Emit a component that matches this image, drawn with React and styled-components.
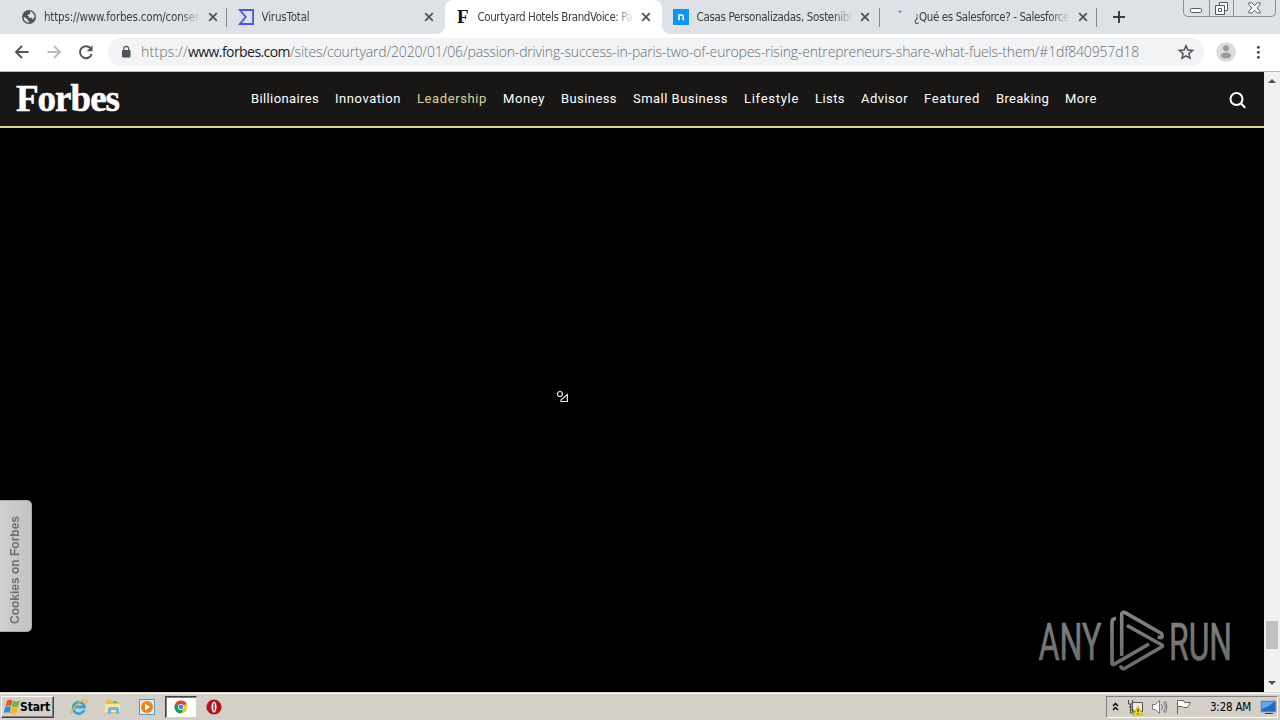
import React, { useLayoutEffect, useRef, useState } from 'react';
import styled, { createGlobalStyle, css } from 'styled-components';

const GlobalStyle = createGlobalStyle`
  * {
    box-sizing: border-box;
  }

  body {
    margin: 0;
    overflow: hidden;
    background: #000;
    font-family: "DejaVu Sans Condensed", "DejaVu Sans", sans-serif;
  }

  svg {
    display: block;
    flex: none;
  }
`;

const Screen = styled.div`
  display: flex;
  flex-direction: column;
  width: 1280px;
  height: 720px;
  overflow: hidden;
`;

const TabStrip = styled.div`
  display: flex;
  flex: none;
  height: 34px;
  padding-left: 9.5px;
  background: #dee1e6;
`;

const Tab = styled.div`
  position: relative;
  display: flex;
  align-items: center;
  width: 217.5px;
  padding: 0 9px 0 11px;
  color: #3c4043;
  ${({ $divider }) => $divider && css`
    &::after {
      content: '';
      position: absolute;
      right: 0;
      top: 8px;
      width: 1px;
      height: 19px;
      background: #85888d;
    }
  `}
  ${({ $active }) => $active && css`
    background: #fff;
    border-radius: 8px 8px 0 0;
    &::before,
    &::after {
      content: '';
      position: absolute;
      bottom: 0;
      width: 8px;
      height: 8px;
    }
    &::before {
      left: -8px;
      background: radial-gradient(circle at 0 0, transparent 7.5px, #fff 8px);
    }
    &::after {
      right: -8px;
      background: radial-gradient(circle at 100% 0, transparent 7.5px, #fff 8px);
    }
  `}
`;

const Favicon = styled.div`
  display: flex;
  align-items: center;
  justify-content: center;
  width: 16px;
  height: 16px;
  margin-right: 7.5px;
`;

const FaviconLetter = styled.span`
  color: #111;
  font: bold 19px/16px "Liberation Serif", serif;
`;

const TabTitle = styled.div`
  width: 156px;
  margin-right: 6.5px;
  font-size: 11.5px;
  line-height: 16px;
  white-space: nowrap;
  mask-image: linear-gradient(to right, #000 136px, transparent 156px);
`;

const NewTab = styled.div`
  display: flex;
  align-items: center;
  padding-left: 15px;
`;

const WindowControls = styled.div`
  display: flex;
  width: 93px;
  height: 17px;
  margin: 0 4px 0 auto;
  border: 1px solid #8c8f98;
  border-top: 0;
  border-radius: 0 0 5px 5px;
`;

const WindowButton = styled.div`
  display: flex;
  align-items: center;
  justify-content: center;
  width: ${({ $wide }) => ($wide ? '42px' : '25px')};
  & + & {
    border-left: 1px solid #8c8f98;
  }
`;

const Toolbar = styled.div`
  display: flex;
  flex: none;
  align-items: center;
  height: 38px;
  padding: 0 14px 1px;
  background: #fff;
  border-bottom: 1px solid #b5bcc0;
`;

const NavButtons = styled.div`
  display: flex;
  gap: 16px;
  width: 94px;
`;

const AddressBar = styled.div`
  display: flex;
  align-items: center;
  width: 1096px;
  height: 28px;
  padding: 0 10px 0 12px;
  border-radius: 14px;
  background: #f1f3f4;
`;

const Url = styled.div`
  display: flex;
  flex: 1;
  margin-left: 9px;
  color: #6b6f74;
  font: 300 14px/20px "Open Sans", sans-serif;
`;

const Host = styled.span`
  color: #202124;
  font-weight: 400;
`;

const ToolbarEnd = styled.div`
  display: flex;
  align-items: center;
  gap: 14px;
  margin-left: 12px;
`;

const Viewport = styled.div`
  display: flex;
  flex: 1;
  min-height: 0;
`;

const Page = styled.main`
  position: relative;
  width: 1264px;
  background: #000;
`;

const SiteHeader = styled.header`
  display: flex;
  align-items: center;
  height: 56px;
  padding: 0 17px 0 16px;
  background: #181716;
  border-bottom: 2px solid #dcd29a;
`;

const Logo = styled.div`
  width: 235px;
  padding-bottom: 1px;
  color: #fff;
  font: bold 37px/40px "Liberation Serif", serif;
  -webkit-text-stroke: 0.5px #fff;
`;

const SiteNav = styled.nav`
  display: flex;
  flex: 1;
  gap: 16px;
`;

const SiteLink = styled.a`
  color: ${({ $current }) => ($current ? '#dcd29a' : '#fff')};
  font: 13px/18px Roboto, "Liberation Sans", sans-serif;
`;

const SearchButton = styled.div`
  padding-top: 2px;
`;

const CookieTab = styled.div`
  position: absolute;
  left: 0;
  top: 428px;
  display: flex;
  align-items: center;
  justify-content: center;
  width: 32px;
  height: 132px;
  padding: 8px 2px 0 0;
  border: 1px solid #aaa;
  border-left: 0;
  border-radius: 0 5px 5px 0;
  background: linear-gradient(to right, #d0d0d0, #c2c2c2);
  color: #707070;
  font: bold 12px/14px "Liberation Sans", sans-serif;
  writing-mode: vertical-rl;
  white-space: nowrap;

  span {
    transform: rotate(180deg);
  }
`;

const Pointer = styled.div`
  position: absolute;
  left: 556px;
  top: 318px;
`;

const Watermark = styled.div`
  position: absolute;
  left: 1036px;
  top: 536px;
`;

const Scrollbar = styled.div`
  display: flex;
  flex-direction: column;
  align-items: center;
  width: 16px;
  padding: 7px 0;
  background: #f1f1f1;
`;

const Thumb = styled.div`
  width: 12px;
  height: 28px;
  margin: auto 0 32px;
  background: #c1c1c1;
`;

const Taskbar = styled.footer`
  display: flex;
  flex: none;
  align-items: center;
  height: 28px;
  padding: 2px 2px 0 1px;
  background: #d4d0c8;
  box-shadow: inset 0 1px #d4d0c8, inset 0 2px #fff;
`;

const StartButton = styled.div`
  display: flex;
  align-items: center;
  width: 53px;
  height: 22px;
  padding-left: 2px;
  border: 1px solid;
  border-color: #fff #404040 #404040 #fff;
  box-shadow: inset -1px -1px #808080;
  color: #000;
  font: bold 12px/18px "DejaVu Sans Condensed", "DejaVu Sans", sans-serif;
`;

const QuickLaunch = styled.div`
  display: flex;
  align-items: center;
  margin-left: 8px;
`;

const TaskButton = styled.div`
  display: flex;
  align-items: center;
  justify-content: center;
  width: 34px;
  height: 22px;
  ${({ $pressed }) => $pressed && css`
    width: 32px;
    margin: 0 0 0 1px;
    background: #fff;
    border: 1px solid;
    border-color: #404040 #d4d0c8 #d4d0c8 #404040;
    box-shadow: inset 1px 1px #808080;
  `}
`;

const Tray = styled.div`
  display: flex;
  align-items: center;
  width: 172px;
  height: 22px;
  margin-left: auto;
  padding-left: 5px;
  border: 1px solid;
  border-color: #808080 #fff #fff #808080;
`;

const TrayIcons = styled.div`
  display: flex;
  align-items: center;
  gap: 7px;
  width: 98px;
`;

const Clock = styled.div`
  width: 50px;
  color: #000;
  font-size: 11.5px;
  line-height: 16px;
`;

const FitSpan = styled.span`
  display: inline-block;
  white-space: pre;
`;

// Spreads the glyphs evenly so the text fills the given width.
function Fit({ width, children }) {
  const ref = useRef(null);
  const [spacing, setSpacing] = useState(0);

  useLayoutEffect(() => {
    const natural = ref.current.getBoundingClientRect().width;
    setSpacing((width - natural) / children.length);
  }, []);

  return <FitSpan ref={ref} style={{ letterSpacing: spacing }}>{children}</FitSpan>;
}

const CloseIcon = () => (
  <svg width="14" height="14" viewBox="0 0 14 14" stroke="#505357" strokeWidth="1.8">
    <path d="M3.2 3.2l7.600 7.600M10.800 3.200l-7.600 7.600" />
  </svg>
);

const GlobeIcon = () => (
  <svg width="16" height="16" viewBox="0 0 16 16">
    <circle cx="8" cy="8" r="7" fill="#505357" />
    <path d="M2.6 7.8l4 2.4v1.5l1.6.8v1.2C4.8 13.7 2.6 11.3 2.6 7.8zM9 2.5c3 .6 4.6 2.9 4.6 5.6l-1.9 2.4-1.2-1.8H7.8V7.2l-1.6-.7 1.3-1.3H9z" fill="#dee1e6" />
  </svg>
);

const VirusTotalIcon = () => (
  <svg width="16" height="16" viewBox="0 0 16 16" fill="none" stroke="#4855f0" strokeWidth="1.8">
    <path d="M1.8 1h13.3v14H1.8l6-7z" />
  </svg>
);

const CasasIcon = () => (
  <svg width="16" height="16" viewBox="0 0 16 16">
    <path fill="#0c97f5" d="M0 0h16v16H0z" />
    <path d="M6 11.2V6h2.5q1.7 0 1.7 1.7v3.5" fill="none" stroke="#fff" strokeWidth="1.700" />
  </svg>
);

const LoadingIcon = () => (
  <svg width="16" height="16" viewBox="0 0 16 16">
    <path d="M7.500 2.600h3" stroke="#5185db" strokeWidth="1.8" />
  </svg>
);

const ArrowIcon = ({ forward }) => (
  <svg width="16" height="16" viewBox="0 0 16 16" fill="none" stroke={forward ? '#b9bbbe' : '#505357'} strokeWidth="1.9">
    <path d={forward ? 'M1.5 8h12M8 2l6 6-6 6' : 'M14.5 8h-12M8 2L2 8l6 6'} />
  </svg>
);

const ReloadIcon = () => (
  <svg width="16" height="16" viewBox="0 0 16 16">
    <path d="M12.5 4.2A6 6 0 1 0 13.7 10" fill="none" stroke="#505357" strokeWidth="2" />
    <path d="M14.5 1.2v6H8.7z" fill="#505357" />
  </svg>
);

const LockIcon = () => (
  <svg width="12" height="14" viewBox="0 0 12 14">
    <rect x="2" y="5" width="8.500" height="7.500" rx="1" fill="#505357" />
    <path d="M3.800 6V3.7a2.400 2.400 0 0 1 4.800 0V6" fill="none" stroke="#505357" strokeWidth="1.2" />
  </svg>
);

const StarIcon = () => (
  <svg width="16" height="16" viewBox="0 0 16 16" fill="none" stroke="#505357" strokeWidth="1.5">
    <path d="M8 1.8l1.8 4.3 4.7.4-3.6 3.1 1.1 4.6L8 11.8l-4 2.4 1.1-4.6-3.6-3.1 4.7-.4z" />
  </svg>
);

const AvatarIcon = () => (
  <svg width="20" height="20" viewBox="0 0 20 20">
    <circle cx="10" cy="10" r="9.8" fill="#dcdcdc" />
    <circle cx="10" cy="6.3" r="3" fill="#9b9b9b" />
    <ellipse cx="10" cy="13.4" rx="5.2" ry="2.9" fill="#9b9b9b" />
  </svg>
);

const MenuIcon = () => (
  <svg width="16" height="16" viewBox="0 0 16 16" fill="#505357">
    <circle cx="8.400" cy="3.2" r="1.5" />
    <circle cx="8.400" cy="8.2" r="1.5" />
    <circle cx="8.400" cy="13.2" r="1.5" />
  </svg>
);

const SearchIcon = () => (
  <svg width="18" height="18" viewBox="0 0 18 18" fill="none" stroke="#fff" strokeWidth="2">
    <circle cx="7.500" cy="8" r="6" />
    <path d="M11.800 12.300l4.4 4.4" />
  </svg>
);

const AnyRunLogo = () => (
  <svg width="200" height="70" viewBox="0 0 200 70">
    <defs>
      <linearGradient id="metal" gradientUnits="userSpaceOnUse" x1="0" y1="3" x2="0" y2="63">
        <stop offset="0" stopColor="#858585" />
        <stop offset="1" stopColor="#686868" />
      </linearGradient>
    </defs>
    <g fill="url(#metal)" stroke="url(#metal)" strokeWidth=".7" fontFamily="Roboto" fontSize="52">
      <text x="2.500" y="51.700" textLength="63" lengthAdjust="spacingAndGlyphs">ANY</text>
      <text x="133" y="51.700" textLength="63" lengthAdjust="spacingAndGlyphs">RUN</text>
    </g>
    <g fill="none" stroke="url(#metal)" strokeWidth="3.600" strokeLinejoin="round">
      <path d="M80 10.500h-1q-3 .5-3 4v41.500l1.500.6L113 36" />
      <path d="M85.700 48V6q.5-2.200 3-1.600L125.500 25.500q1.800 3.500-.8 4.300l-3-.7" />
      <path d="M91 17.500L126 37q1 1 0 1.800L88.500 60.500q-3.500.8-3.700-3.200" />
    </g>
  </svg>
);

const PointerIcon = () => (
  <svg width="14" height="14" viewBox="0 0 14 14" fill="none" stroke="#e8e8e8" strokeWidth="1.2">
    <circle cx="4" cy="4" r="2.5" />
    <path d="M11.400 4.500v7H5v-1.500z" />
  </svg>
);

const ScrollArrow = ({ down }) => (
  <svg width="8" height="4" viewBox="0 0 8 4">
    <path d={down ? 'M0 0h8L4 4z' : 'M0 4h8L4 0z'} fill="#505050" />
  </svg>
);

const WindowsFlag = () => (
  <svg width="16" height="16" viewBox="0 0 16 16">
    <path d="M3 1.500q3-2 5.500-.3L7.200 7.200Q4.700 5.600 1.400 7.400z" fill="#e95b26" />
    <path d="M9.200 1.700q3 1.500 6.500-.2L14.200 7.400q-3 1.500-6.300.2z" fill="#73b43a" />
    <path d="M1.200 8.100q3-1.500 5.700-.2l-1.400 6Q3 12.400-.3 14z" fill="#3488d0" />
    <path d="M7.700 8.300q3 1.500 6.200 0L12.500 14.300q-3 1.500-6.300 0z" fill="#f5b91e" />
  </svg>
);

const ExplorerIcon = () => (
  <svg width="18" height="18" viewBox="0 0 18 18" fill="none">
    <path d="M14.200 12a5.700 5.700 0 1 1 .3-3H5" stroke="#38a2dd" strokeWidth="2.800" />
    <path d="M2 16C-1 13 11 1 16 2q2 1-1 5" stroke="#e8b637" strokeWidth="1.400" />
  </svg>
);

const FolderIcon = () => (
  <svg width="18" height="18" viewBox="0 0 18 18">
    <path d="M2 4V2h5l1 2h7v11H2z" fill="#e3bd57" />
    <path d="M1 6h15v8H1z" fill="#f6e59b" />
    <path d="M4 16v-5q0-2 2-2h7q2 0 2 2v5h-3v-4H7v4z" fill="#72b6df" />
    <path d="M9 3h4v2H9z" fill="#77b757" />
  </svg>
);

const PlayerIcon = () => (
  <svg width="18" height="18" viewBox="0 0 18 18">
    <path d="M1.500 1.500h15v15h-15z" fill="#d5ebf6" stroke="#579bc2" />
    <circle cx="9" cy="9" r="6" fill="#ef8318" />
    <path d="M7 5.500l5 3.500-5 3.500z" fill="#fff" />
  </svg>
);

const ChromeIcon = () => (
  <svg width="14" height="14" viewBox="0 0 14 14">
    <circle cx="7" cy="7" r="6.500" fill="#f4c534" />
    <path d="M7 7L1.400 3.700A6.500 6.500 0 0 1 12.600 3.700z" fill="#dc4437" />
    <path d="M7 7L1.400 3.700A6.500 6.500 0 0 0 7 13.500l2.500-4.300z" fill="#189d58" />
    <circle cx="7" cy="7" r="3.100" fill="#fff" />
    <circle cx="7" cy="7" r="2.400" fill="#4285f4" />
  </svg>
);

const OperaIcon = () => (
  <svg width="16" height="16" viewBox="0 0 16 16">
    <circle cx="8" cy="8" r="7.600" fill="#b41419" />
    <ellipse cx="8" cy="8" rx="2.500" ry="5.500" fill="#fff" />
    <ellipse cx="8" cy="8" rx=".8" ry="4.400" fill="#a22a2a" />
  </svg>
);

const ExpandIcon = () => (
  <svg width="8" height="10" viewBox="0 0 8 10" fill="none" stroke="#000" strokeWidth="1.400">
    <path d="M1 4l2.500-2.500L6 4M1 8l2.500-2.500L6 8" />
  </svg>
);

const NetworkIcon = () => (
  <svg width="17" height="17" viewBox="0 0 17 17">
    <path d="M5.500 3.500h10v9h-10z" fill="#ececec" stroke="#555" />
    <path d="M1.500 1v4h4V1M3.500 5v9h4M2 8h4M4 11h3" fill="none" stroke="#4a4a4a" />
    <path d="M11 7l5 9H6z" fill="#f5d61c" stroke="#c49c00" strokeWidth=".6" />
    <path d="M11 10v3M11 14v1" stroke="#222" strokeWidth="1.200" />
  </svg>
);

const SpeakerIcon = () => (
  <svg width="17" height="16" viewBox="0 0 17 16" fill="none" stroke="#777">
    <path d="M1.500 5.500h3l4-4v13l-4-4h-3z" fill="#fff" />
    <path d="M10.500 5q2 3 0 6M12.500 3q3.500 5 0 10M14 2q4 6 0 12" />
  </svg>
);

const FlagIcon = () => (
  <svg width="17" height="16" viewBox="0 0 17 16" fill="#fff" stroke="#666">
    <path d="M2.500 15V1.500h6l1 2h6l-3 5h-4l-1-1h-5" />
  </svg>
);

const DesktopIcon = () => (
  <svg width="17" height="15" viewBox="0 0 17 15">
    <path d="M1 1h15v11H1z" fill="#2369be" stroke="#88a4bf" />
    <path d="M2 9Q8 8 14 2H2z" fill="#65a7e6" />
    <path d="M5 13.500h8" stroke="#293e59" />
  </svg>
);

const tabs = [
  { title: 'https://www.forbes.com/conser', width: 155, icon: <GlobeIcon />, divider: true },
  { title: 'VirusTotal', width: 48, icon: <VirusTotalIcon /> },
  { title: 'Courtyard Hotels BrandVoice: Pa', width: 155, icon: <FaviconLetter>F</FaviconLetter>, active: true },
  { title: 'Casas Personalizadas, Sostenibl', width: 155, icon: <CasasIcon />, divider: true },
  { title: '¿Qué es Salesforce? - Salesforce', width: 155, icon: <LoadingIcon />, divider: true },
];

const links = [
  ['Billionaires', 68],
  ['Innovation', 66],
  ['Leadership', 70],
  ['Money', 42],
  ['Business', 56],
  ['Small Business', 95],
  ['Lifestyle', 55],
  ['Lists', 30],
  ['Advisor', 47],
  ['Featured', 56],
  ['Breaking', 53],
  ['More', 32],
];

function App() {
  return (
    <Screen>
      <GlobalStyle />
      <TabStrip>
        {tabs.map((tab) => (
          <Tab key={tab.title} $active={tab.active} $divider={tab.divider}>
            <Favicon>{tab.icon}</Favicon>
            <TabTitle><Fit width={tab.width}>{tab.title}</Fit></TabTitle>
            <CloseIcon />
          </Tab>
        ))}
        <NewTab>
          <svg width="14" height="14" viewBox="0 0 14 14" stroke="#3c4043" strokeWidth="2">
            <path d="M1 7h12M7 1v12" />
          </svg>
        </NewTab>
        <WindowControls>
          <WindowButton>
            <svg width="12" height="16" viewBox="0 0 12 16">
              <rect x=".5" y="8.500" width="11" height="4" rx="1" fill="#fff" stroke="#555963" />
            </svg>
          </WindowButton>
          <WindowButton>
            <svg width="13" height="13" viewBox="0 0 13 13" fill="#fff" stroke="#555963">
              <path d="M4.500.5h8v8h-8z" />
              <path d="M.5 3.500h9v9h-9z" />
              <path d="M3.500 6.500h3v3h-3z" />
            </svg>
          </WindowButton>
          <WindowButton $wide>
            <svg width="13" height="12" viewBox="0 0 13 12">
              <path d="M.8.800h3l2.700 2.700L9.200.800h3v1.500L9 6l3.200 3.400v1.500h-3L6.500 8.100l-2.700 2.800h-3V9.400L4 6 .8 2.300z" fill="#fff" stroke="#555963" />
            </svg>
          </WindowButton>
        </WindowControls>
      </TabStrip>

      <Toolbar>
        <NavButtons>
          <ArrowIcon />
          <ArrowIcon forward />
          <ReloadIcon />
        </NavButtons>
        <AddressBar>
          <LockIcon />
          <Url>
            <Fit width={47}>https://</Fit>
            <Host><Fit width={102}>www.forbes.com</Fit></Host>
            <Fit width={849}>
              {'/sites/courtyard/2020/01/06/passion-driving-success-in-paris-two-of-europes-rising-entrepreneurs-share-what-fuels-them/#1df840957d18'}
            </Fit>
          </Url>
          <StarIcon />
        </AddressBar>
        <ToolbarEnd>
          <AvatarIcon />
          <MenuIcon />
        </ToolbarEnd>
      </Toolbar>

      <Viewport>
        <Page>
          <SiteHeader>
            <Logo><Fit width={103}>Forbes</Fit></Logo>
            <SiteNav>
              {links.map(([label, width]) => (
                <SiteLink key={label} $current={label === 'Leadership'}>
                  <Fit width={width}>{label}</Fit>
                </SiteLink>
              ))}
            </SiteNav>
            <SearchButton><SearchIcon /></SearchButton>
          </SiteHeader>
          <Pointer><PointerIcon /></Pointer>
          <CookieTab><span>Cookies on Forbes</span></CookieTab>
          <Watermark><AnyRunLogo /></Watermark>
        </Page>
        <Scrollbar>
          <ScrollArrow />
          <Thumb />
          <ScrollArrow down />
        </Scrollbar>
      </Viewport>

      <Taskbar>
        <StartButton>
          <WindowsFlag />
          <Fit width={30}>Start</Fit>
        </StartButton>
        <QuickLaunch>
          <TaskButton><ExplorerIcon /></TaskButton>
          <TaskButton><FolderIcon /></TaskButton>
          <TaskButton><PlayerIcon /></TaskButton>
          <TaskButton $pressed><ChromeIcon /></TaskButton>
          <TaskButton><OperaIcon /></TaskButton>
        </QuickLaunch>
        <Tray>
          <TrayIcons>
            <ExpandIcon />
            <NetworkIcon />
            <SpeakerIcon />
            <FlagIcon />
          </TrayIcons>
          <Clock><Fit width={41}>3:28 AM</Fit></Clock>
          <DesktopIcon />
        </Tray>
      </Taskbar>
    </Screen>
  );
}

export default App;
